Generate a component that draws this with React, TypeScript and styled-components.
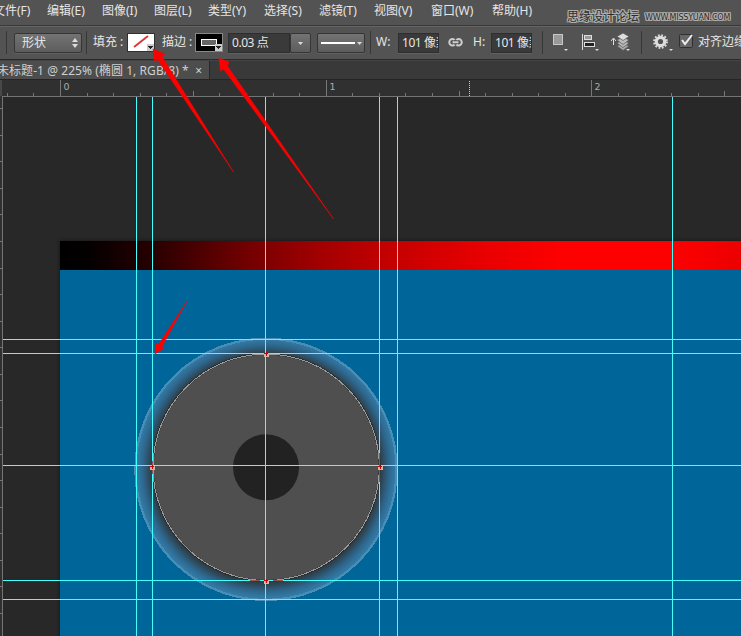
import React from "react";
import styled, { createGlobalStyle } from "styled-components";

const Global = createGlobalStyle`
  * { box-sizing: border-box; }
  html, body { margin: 0; padding: 0; overflow: hidden; background: #282828; }
  body { font-family: "Noto Sans", "Noto Sans CJK SC", sans-serif; }
`;

const Window = styled.div`
  position: relative;
  width: 741px;
  height: 636px;
  display: flex;
  flex-direction: column;
  overflow: hidden;
  background: #282828;
  color: #e6e6e6;
  font-size: 12px;
`;

const MenuBar = styled.header`
  flex: none;
  display: flex;
  height: 26px;
  background: #535353;
  border-bottom: 1px solid #393939;
`;

const MenuItem = styled.span<{ $w: number; $shift?: number }>`
  flex: none;
  width: ${(p) => p.$w}px;
  margin-left: ${(p) => p.$shift ?? 0}px;
  line-height: 22px;
  white-space: nowrap;
`;

const Watermark = styled.div`
  display: flex;
  align-items: center;
  height: 31px;
  color: #2c2c2c;
  white-space: nowrap;
  text-shadow: -1px -1px #b0b0b0, 0 -1px #b0b0b0, 1px -1px #b0b0b0, -1px 0 #b0b0b0, 1px 0 #b0b0b0,
    -1px 1px #b0b0b0, 0 1px #b0b0b0, 1px 1px #b0b0b0;
`;

const ForumName = styled.span`
  width: 78px;
  font: 12px "Noto Sans CJK SC", sans-serif;
`;

const ForumSite = styled.span`
  font: 8px "DejaVu Sans", sans-serif;
  letter-spacing: -0.2px;
  padding-top: 4px;
`;

const OptionsBar = styled.div`
  flex: none;
  display: flex;
  align-items: flex-start;
  height: 34px;
  padding-top: 6px;
  background: #535353;
  border-top: 1px solid #656565;
  border-bottom: 1px solid #292929;
`;

const Separator = styled.i<{ $l: number; $r: number }>`
  flex: none;
  width: 1px;
  height: 23px;
  margin: -2px ${(p) => p.$r}px 0 ${(p) => p.$l}px;
  background: #373737;
`;

const Select = styled.div<{ $w: number }>`
  flex: none;
  display: flex;
  align-items: center;
  justify-content: space-between;
  width: ${(p) => p.$w}px;
  height: 20px;
  border: 1px solid #353535;
  border-radius: 2px;
  background: linear-gradient(#737373, #5d5d5d);
  box-shadow: 0 1px #606060;
`;

const SelectText = styled.span`
  padding-left: 7px;
  line-height: 18px;
`;

const Label = styled.span<{ $w: number; $l?: number }>`
  flex: none;
  width: ${(p) => p.$w}px;
  margin-left: ${(p) => p.$l ?? 0}px;
  line-height: 18px;
  white-space: nowrap;
`;

const Field = styled.div<{ $w: number }>`
  flex: none;
  width: ${(p) => p.$w}px;
  height: 20px;
  padding-left: 3px;
  overflow: hidden;
  border: 1px solid #2e2e2e;
  background: #3a3a3a;
  box-shadow: 0 1px #616161;
  line-height: 18px;
  letter-spacing: -0.45px;
  white-space: nowrap;
`;

const Spacer = styled.i<{ $w: number }>`
  flex: none;
  width: ${(p) => p.$w}px;
`;

const Icon = styled.svg<{ $l?: number; $t?: number }>`
  flex: none;
  display: block;
  margin: ${(p) => p.$t ?? 0}px 0 0 ${(p) => p.$l ?? 0}px;
`;

const TabBar = styled.nav`
  flex: none;
  display: flex;
  height: 19px;
  background: #393939;
  border-top: 1px solid #444;
`;

const Tab = styled.div`
  display: flex;
  justify-content: space-between;
  width: 210px;
  padding-right: 7px;
  background: #4d4d4d;
  border-right: 1px solid #282828;
  color: #d0d0d0;
  line-height: 19px;
  white-space: nowrap;
`;

const TabTitle = styled.span`
  margin-left: -3px;
  letter-spacing: 0.06px;
`;

const TopRuler = styled.svg`
  flex: none;
  display: block;
`;

const Workspace = styled.main`
  display: flex;
  flex: 1;
`;

const Artboard = styled.svg`
  flex: none;
  display: block;
`;

const Annotations = styled.svg`
  position: absolute;
  inset: 0;
  pointer-events: none;
`;

const menus: [string, number][] = [
  ["文件(F)", 54], ["编辑(E)", 55], ["图像(I)", 52], ["图层(L)", 54],
  ["类型(Y)", 56], ["选择(S)", 55], ["滤镜(T)", 55], ["视图(V)", 57],
  ["窗口(W)", 61], ["帮助(H)", 75],
];

const ticksX = [7, 33, 87, 113, 140, 166, 193, 219, 246, 273, 299, 352, 379, 405, 432, 459, 485, 512, 538, 565, 618, 645, 671, 698, 724];
const ticksY = [108, 135, 161, 188, 214, 241, 268, 294, 321, 347, 374, 400, 427, 454, 480, 507, 533, 560, 586, 613];
const guidesX = [136, 152, 265, 379, 397, 672];
const guidesY = [339, 353, 465, 580, 599];
const anchors = [[264, 352], [150, 465], [378, 465], [264, 579]];

const HorizontalRuler = () => (
  <TopRuler width="741" height="18" viewBox="0 79 741 18" shapeRendering="crispEdges">
    <rect y="79" width="741" height="18" fill="#303030" />
    <rect y="79" width="741" height="1" fill="#252525" />
    <rect y="80" width="2" height="16" fill="#484848" />
    {ticksX.map((x) => {
      const mid = x === 193 || x === 459 || x === 724;
      return <rect key={x} x={x} y={mid ? 91 : 93} width="1" height={mid ? 5 : 3} fill="#777" />;
    })}
    {[60, 326, 591].map((x, i) => (
      <g key={x}>
        <rect x={x} y="80" width="1" height="16" fill="#777" />
        <text x={x + 3.5} y="90" fill="#aaa" fontFamily="DejaVu Sans, sans-serif" fontSize="9.5">{i}</text>
      </g>
    ))}
    <path d="M469.5 81V96" stroke="#ccc" strokeDasharray="1 1" />
    <rect x="2" y="96" width="739" height="1" fill="#747474" />
  </TopRuler>
);

const Canvas = () => (
  <Artboard width="738" height="539" viewBox="3 97 738 539">
    <defs>
      <linearGradient id="bar" gradientUnits="userSpaceOnUse" x1="60" x2="741" y1="0" y2="0">
        <stop offset="0" stopColor="#000" />
        <stop offset=".04" stopColor="#040000" />
        <stop offset=".14" stopColor="#2a0000" />
        <stop offset=".265" stopColor="#6e0000" />
        <stop offset=".38" stopColor="#a20000" />
        <stop offset=".47" stopColor="#c00000" />
        <stop offset=".62" stopColor="#e80000" />
        <stop offset=".73" stopColor="#fd0000" />
        <stop offset=".8" stopColor="#f00" />
        <stop offset=".9" stopColor="#fd0000" />
        <stop offset="1" stopColor="#ec0000" />
      </linearGradient>
      <radialGradient id="halo" gradientUnits="userSpaceOnUse" cx="266" cy="468.5" r="132">
        <stop offset=".84" stopColor="#2c3336" />
        <stop offset=".88" stopColor="#2d4656" />
        <stop offset=".93" stopColor="#2e658a" />
        <stop offset=".97" stopColor="#3077a3" />
        <stop offset="1" stopColor="#347faa" />
      </radialGradient>
      <filter id="edge" x="-5%" y="-5%" width="110%" height="110%">
        <feGaussianBlur stdDeviation="2" />
      </filter>
    </defs>
    <rect x="60" y="241" width="700" height="420" fill="#000" opacity=".5" filter="url(#edge)" />
    <rect x="60" y="241" width="681" height="29" fill="url(#bar)" />
    <rect x="60" y="270" width="681" height="366" fill="#069" />
    <circle cx="266" cy="469.3" r="131.3" fill="url(#halo)" />
    <circle cx="266" cy="469.3" r="130.6" fill="none" stroke="#4b8db3" strokeWidth="2.2" shapeRendering="crispEdges" />
    <circle cx="266.2" cy="467.3" r="113.5" fill="#4f4f4f" stroke="#2a2a2a" strokeWidth="1.8" />
    <circle cx="266.2" cy="467.3" r="113.2" fill="none" stroke="#9a9a9a" strokeWidth="1" shapeRendering="crispEdges" />
    <circle cx="266" cy="467.3" r="33" fill="#222" />
    <g fill="#4ff" shapeRendering="crispEdges">
      {guidesX.map((x) => <rect key={x} x={x} y="97" width="1" height="539" />)}
      {guidesY.map((y) => <rect key={y} x="3" y={y} width="738" height="1" />)}
    </g>
    <g fill="#8f5555" shapeRendering="crispEdges">
      <rect x="250" y="580" width="10" height="1" /><rect x="273" y="580" width="10" height="1" />
      <rect x="152" y="461" width="1" height="13" /><rect x="379" y="453" width="1" height="29" />
    </g>
    <g shapeRendering="crispEdges">
      {anchors.map(([x, y]) => (
        <g key={`${x}-${y}`}>
          <rect x={x} y={y + 1} width="5" height="4" fill="#ccb9ad" />
          <rect x={x} y={y + 1} width="4" height="1" fill="#c00" />
          <rect x={x + 2} y={y} width="1" height="4" fill="#c00" />
        </g>
      ))}
    </g>
  </Artboard>
);

export default function App() {
  return (
    <Window>
      <Global />
      <MenuBar>
        {menus.map(([label, w], i) => (
          <MenuItem key={label} $w={w} $shift={i ? 0 : -7}>{label}</MenuItem>
        ))}
        <Watermark>
          <ForumName>思缘设计论坛</ForumName>
          <ForumSite>WWW.MISSYUAN.COM</ForumSite>
        </Watermark>
      </MenuBar>
      <OptionsBar>
        <Separator $l={6} $r={7} />
        <Select $w={68}>
          <SelectText>形状</SelectText>
          <Icon width="12" height="12"><path d="M3 5L6 1L9 5ZM3 7H9L6 11Z" fill="#ddd" /></Icon>
        </Select>
        <Separator $l={4} $r={6} />
        <Label $w={34}>填充 :</Label>
        <Icon width="28" height="19" shapeRendering="crispEdges">
          <rect width="28" height="19" fill="#303030" />
          <rect x="1" y="1" width="26" height="17" fill="#fff" />
          <path d="M7 14L21 3" stroke="#d33" strokeWidth="1.8" shapeRendering="auto" />
          <rect x="20" y="11" width="7" height="7" fill="#ccc" /><path d="M21 13H26L23.5 16Z" fill="#222" />
        </Icon>
        <Label $w={33} $l={7}>描边 :</Label>
        <Icon width="28" height="19" shapeRendering="crispEdges">
          <rect width="28" height="19" fill="#888" />
          <rect x="1" y="1" width="26" height="17" fill="#000" />
          <rect x="6.5" y="6.5" width="15" height="6" fill="#666" stroke="#fff" />
          <rect x="20" y="11" width="7" height="7" fill="#ccc" /><path d="M21 13H26L23.5 16Z" fill="#222" />
        </Icon>
        <Spacer $w={5} />
        <Field $w={62}>0.03 点</Field>
        <Select $w={21}><Icon width="19" height="18"><path d="M7 8H12L9.5 11Z" fill="#ddd" /></Icon></Select>
        <Spacer $w={6} />
        <Select $w={48}>
          <Icon width="46" height="18"><path d="M3 8H37V10H3Z" fill="#fff" /><path d="M39 8H44L41.5 11Z" fill="#ddd" /></Icon>
        </Select>
        <Separator $l={5} $r={5} />
        <Label $w={22}>W:</Label>
        <Field $w={41}>101 像素</Field>
        <Icon $l={9} $t={4} width="15" height="11" fill="none" stroke="#ccc" strokeWidth="2">
          <path d="M6.5 3.2Q6 2 4.5 2A3.2 3.2 0 0 0 4.5 8.5Q6 8.5 6.5 7.5M8.5 3.2Q9 2 10.5 2A3.2 3.2 0 0 1 10.5 8.5Q9 8.5 8.5 7.5M4.5 5.3H10.5" />
        </Icon>
        <Label $w={18} $l={10}>H:</Label>
        <Field $w={41}>101 像素</Field>
        <Separator $l={10} $r={10} />
        <Icon $t={-1} width="16" height="20">
          <rect x=".5" y="2.5" width="9" height="10" fill="#999" stroke="#c8c8c8" /><path d="M11 17H15L13 19Z" fill="#ddd" />
        </Icon>
        <Icon $l={13} $t={-1} width="18" height="20">
          <rect width="1" height="16" y="2" fill="#ddd" />
          <rect x="2.5" y="3.5" width="7" height="4" fill="#999" stroke="#ddd" />
          <rect x="2.5" y="10.5" width="10" height="4" fill="#222" stroke="#ddd" />
          <path d="M13 17H17L15 19Z" fill="#ddd" />
        </Icon>
        <Icon $l={11} $t={-1} width="20" height="20">
          <path d="M0 9L2.5 6L5 9M2.5 7V13" fill="none" stroke="#e0e0e0" />
          <g stroke="#555" strokeWidth=".7">
            <path d="M6 14L12 11L18 14L12 18.5Z" fill="#aaa" /><path d="M6 11L12 8L18 11L12 15.5Z" fill="#bbb" />
            <path d="M6 8L12 5L18 8L12 12.5Z" fill="#bbb" /><path d="M6 4.5L12 1L18 4.5L12 8.5Z" fill="#ddd" />
          </g>
          <path d="M15 17H19L17 19Z" fill="#ddd" />
        </Icon>
        <Separator $l={10} $r={10} />
        <Icon $l={1} $t={-1} width="20" height="20">
          <circle cx="7.5" cy="9.5" r="4.2" fill="none" stroke="#ddd" strokeWidth="3.2" />
          <circle cx="7.5" cy="9.5" r="6.4" fill="none" stroke="#ddd" strokeWidth="2" strokeDasharray="1.75 1.6" />
          <path d="M16 17H20L18 19Z" fill="#ddd" />
        </Icon>
        <Icon $l={6} $t={1} width="15" height="16">
          <rect x=".5" y=".5" width="13" height="13" rx="1" fill="#666" stroke="#303030" />
          <path d="M3 6L6 10L13 1" fill="none" stroke="#eee" strokeWidth="2" />
        </Icon>
        <Label $w={50} $l={4}>对齐边缘</Label>
      </OptionsBar>
      <TabBar>
        <Tab><TabTitle>未标题-1 @ 225% (椭圆 1, RGB/8) *</TabTitle><span>×</span></Tab>
      </TabBar>
      <HorizontalRuler />
      <Workspace>
        <Artboard width="3" height="539" viewBox="0 97 3 539" shapeRendering="crispEdges">
          <rect y="97" width="3" height="539" fill="#303030" />
          {ticksY.map((y) => <rect key={y} y={y} width="2" height="1" fill="#777" />)}
          <rect x="2" y="97" width="1" height="539" fill="#747474" />
        </Artboard>
        <Canvas />
      </Workspace>
      <Annotations width="741" height="636" fill="#f00" stroke="#f00" strokeWidth=".5" strokeLinejoin="round">
        <path d="M153 49L154.5 61.5L157.5 59.5L233.5 172L162 56.5L165 54Z" />
        <path d="M219 58L220.5 71L223.5 69L333.5 219L227.5 66L229 62Z" />
        <path d="M155 354L155.5 343L158.5 344.5L187 301L162 346.5L164 348Z" />
      </Annotations>
    </Window>
  );
}
